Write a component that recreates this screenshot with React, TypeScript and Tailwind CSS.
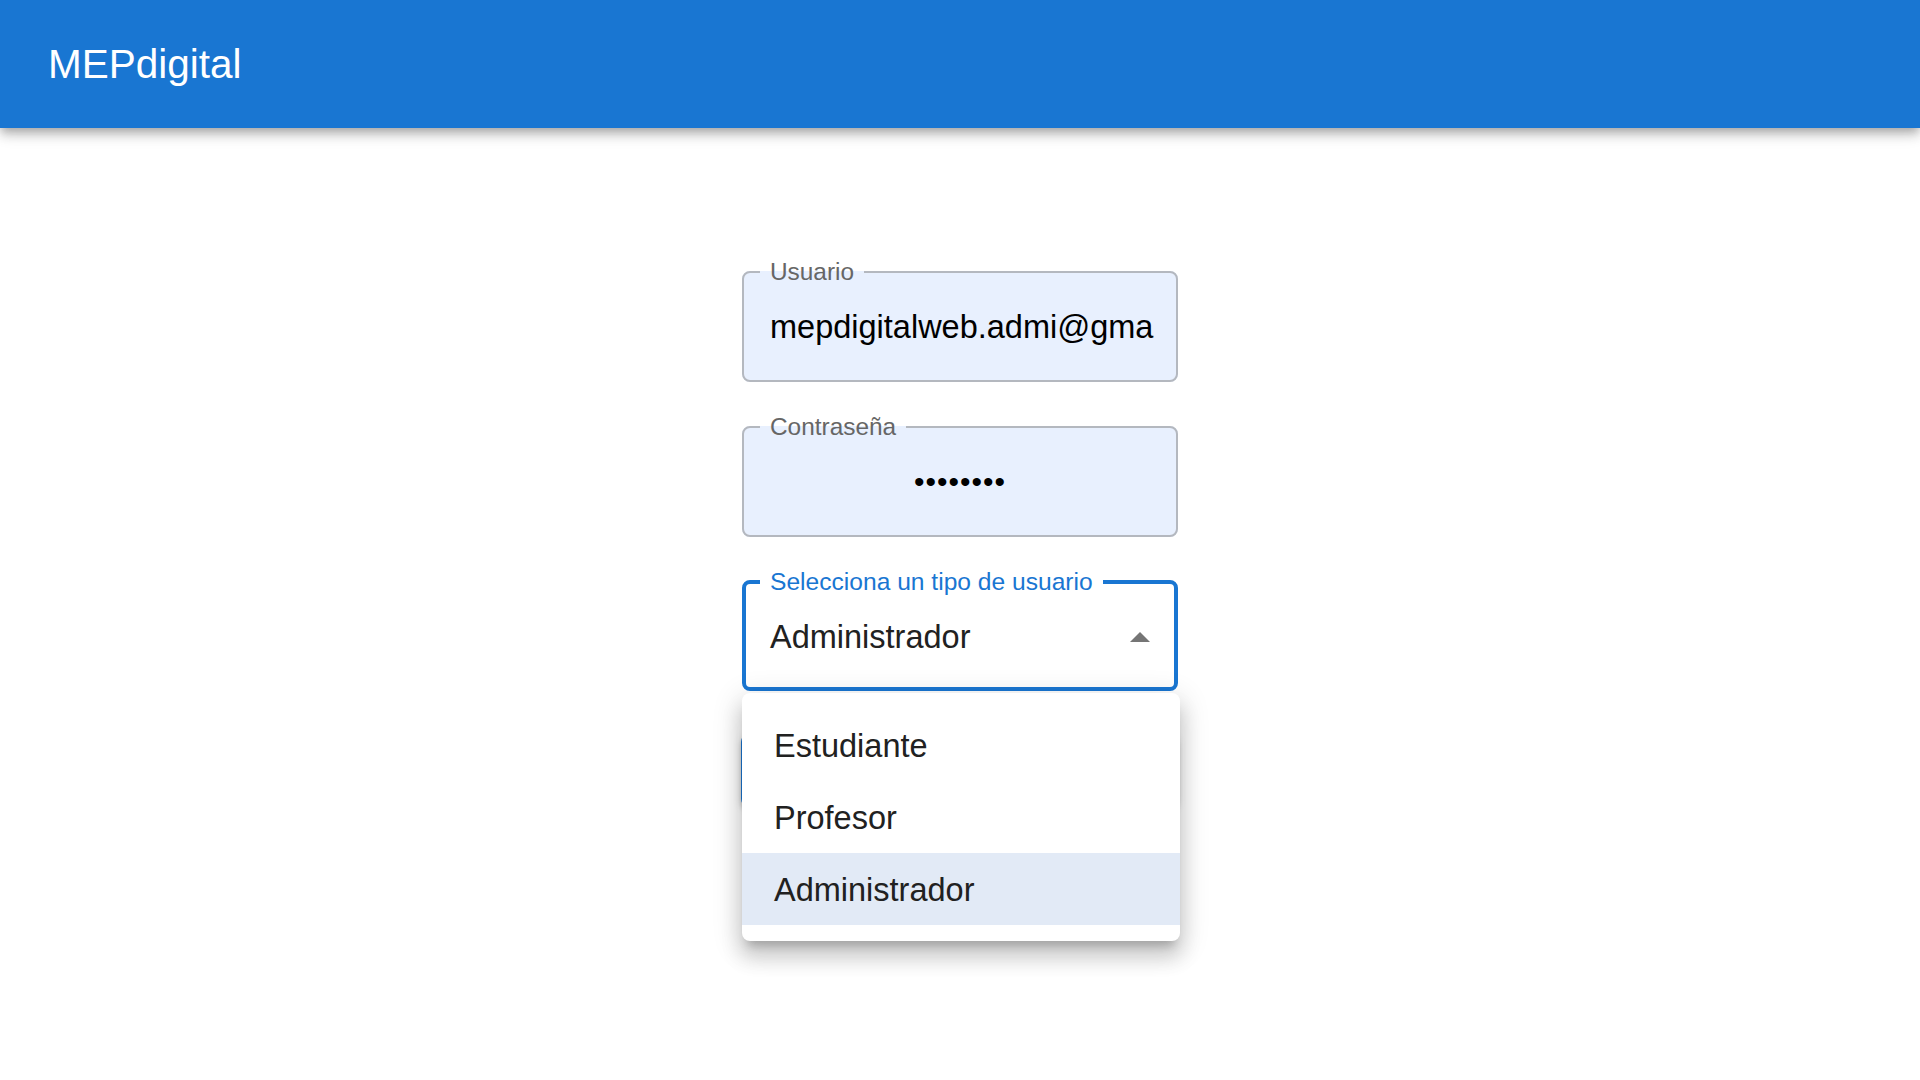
import { useState } from "react";

const OPTIONS = ["Estudiante", "Profesor", "Administrador"];

export default function App() {
  const [tipo, setTipo] = useState("Administrador");
  const [open, setOpen] = useState(true);

  return (
    <div className="min-h-screen bg-white font-['Liberation_Sans',Arial,sans-serif]">
      {/* --- Header --- */}
      <header className="relative z-10 flex h-[128px] items-center bg-[#1976d2] px-[48px] shadow-[0_4px_8px_-2px_rgba(0,0,0,0.2),0_8px_10px_0_rgba(0,0,0,0.14),0_2px_20px_0_rgba(0,0,0,0.12)]">
        <h1 className="text-[40.5px] leading-none text-white">MEPdigital</h1>
      </header>

      {/* --- Login form --- */}
      <main className="flex justify-center pt-[132px]">
        <form className="flex w-[436px] flex-col" onSubmit={(e) => e.preventDefault()}>
          <fieldset className="min-w-0 rounded-[8px] border-2 border-[#b4b8bf] bg-[#e8f0fe]">
            <legend className="ml-[16px] px-[10px] text-[24.4px] leading-[24px] text-[#666666]">Usuario</legend>
            <input
              type="text"
              readOnly
              value="mepdigitalweb.admi@gmail.com"
              className="block h-[96px] w-full bg-transparent pb-[10px] pl-[26px] pr-[22px] text-[32.5px] text-black outline-none"
            />
          </fieldset>

          <fieldset className="mt-[33px] min-w-0 rounded-[8px] border-2 border-[#b4b8bf] bg-[#e8f0fe]">
            <legend className="ml-[16px] px-[10px] text-[24.4px] leading-[24px] text-[#666666]">Contraseña</legend>
            <input
              type="password"
              readOnly
              value="12345678"
              className="block h-[96px] w-full bg-transparent px-[26px] pb-[10px] text-center text-[30px] tracking-[1px] text-black outline-none"
            />
          </fieldset>

          <div className="relative mt-[34px]">
            <fieldset
              className="min-w-0 cursor-pointer rounded-[8px] border-4 border-[#1976d2] bg-white"
              onClick={() => setOpen(!open)}
            >
              <legend className="ml-[14px] px-[10px] text-[24.6px] leading-[22px] text-[#1976d2]">
                Selecciona un tipo de usuario
              </legend>
              <div className="flex h-[94px] items-center justify-between pb-[6px] pl-[24px] pr-[24px]">
                <span className="text-[32.5px] text-[#212121]">{tipo}</span>
                <svg width="20" height="10" viewBox="0 0 20 10" className={open ? "" : "rotate-180"}>
                  <polygon points="0,10 10,0 20,10" fill="#757575" />
                </svg>
              </div>
            </fieldset>

            <button
              type="submit"
              className="-ml-[1px] mt-[43px] h-[73px] w-[437px] rounded-[8px] bg-[#1976d2] text-[28px] uppercase text-white shadow-[0_6px_2px_-4px_rgba(0,0,0,0.2),0_4px_4px_0_rgba(0,0,0,0.14),0_2px_10px_0_rgba(0,0,0,0.12)]"
            >
              Ingresar
            </button>

            {open && (
              <ul className="absolute left-0 top-[122px] w-[438px] rounded-[8px] bg-white py-[16px] shadow-[0_10px_10px_-6px_rgba(0,0,0,0.2),0_16px_20px_2px_rgba(0,0,0,0.14),0_6px_28px_4px_rgba(0,0,0,0.12)]">
                {OPTIONS.map((opt) => (
                  <li
                    key={opt}
                    onClick={() => {
                      setTipo(opt);
                      setOpen(false);
                    }}
                    className={
                      "flex h-[72px] cursor-pointer items-center px-[32px] pt-[2px] text-[32.5px] text-[#212121] " +
                      (opt === tipo ? "bg-[#e2eaf6]" : "hover:bg-gray-50")
                    }
                  >
                    {opt}
                  </li>
                ))}
              </ul>
            )}
          </div>
        </form>
      </main>
    </div>
  );
}
